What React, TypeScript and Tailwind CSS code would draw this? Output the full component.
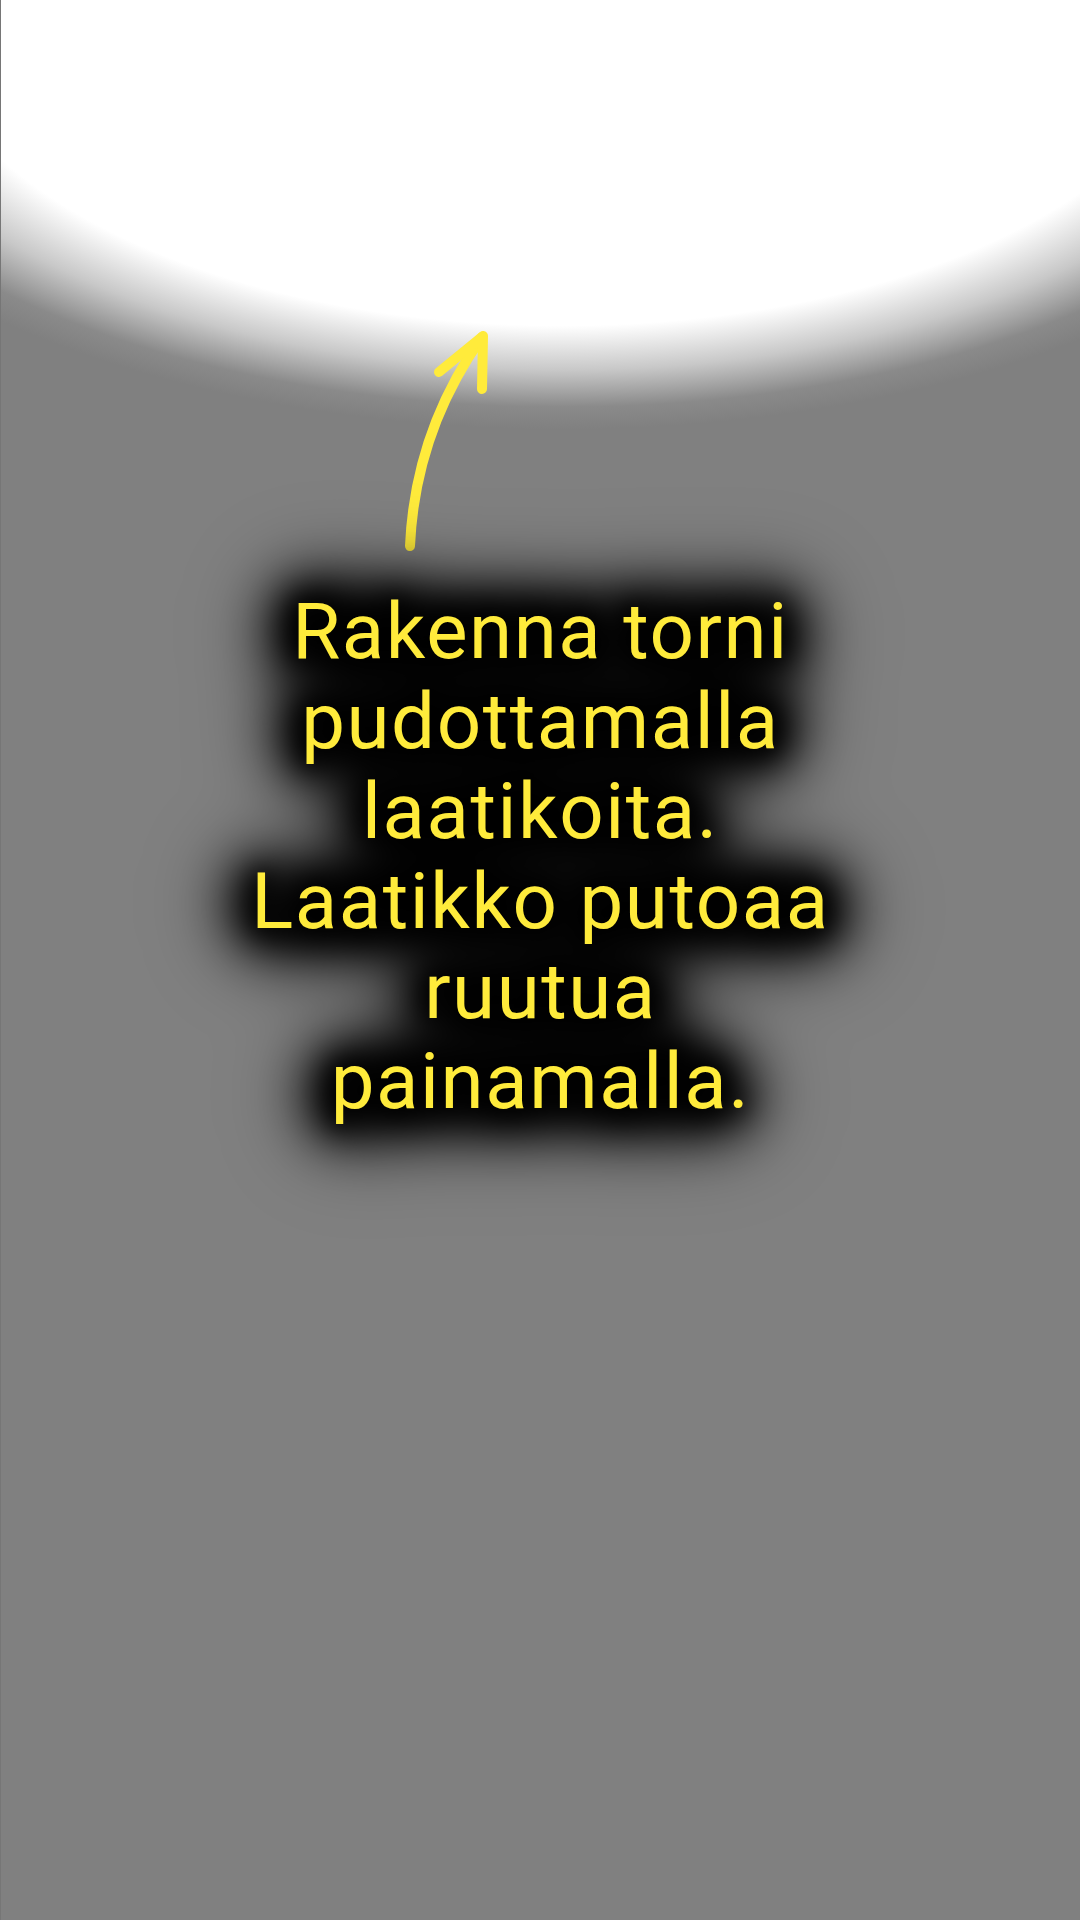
export default function App() {
  return (
    <div className="relative w-full h-[1920px] overflow-hidden bg-[#808080] bg-[radial-gradient(ellipse_730px_370px_at_52%_0,#ffffff_88%,#c8c8c8_100%,#8a8a8a_110%,#808080_116%)] border-l border-[#767676]">
      <div className="flex flex-col items-center pt-[320px]">
        <svg
          className="block w-[1080px] h-[240px]"
          viewBox="0 320 1080 240"
          fill="none"
          stroke="#ffeb3b"
          strokeWidth={10}
          strokeLinecap="round"
          strokeLinejoin="round"
        >
          <path d="M409 546 Q414 432 481 337" />
          <path d="M438 372 L482 336 L481 389" />
        </svg>
        <p
          className="mt-[27px] w-[620px] text-center text-[78px] leading-[90px] tracking-[0.02em] text-[#ffeb3b] font-['Roboto',sans-serif] [filter:drop-shadow(0_0_10px_#000)_drop-shadow(0_0_14px_#000)_drop-shadow(0_0_18px_#000)_drop-shadow(0_0_24px_#000)_drop-shadow(0_0_34px_#000)]"
        >
          Rakenna torni pudottamalla laatikoita. Laatikko putoaa ruutua painamalla.
        </p>
      </div>
    </div>
  );
}
